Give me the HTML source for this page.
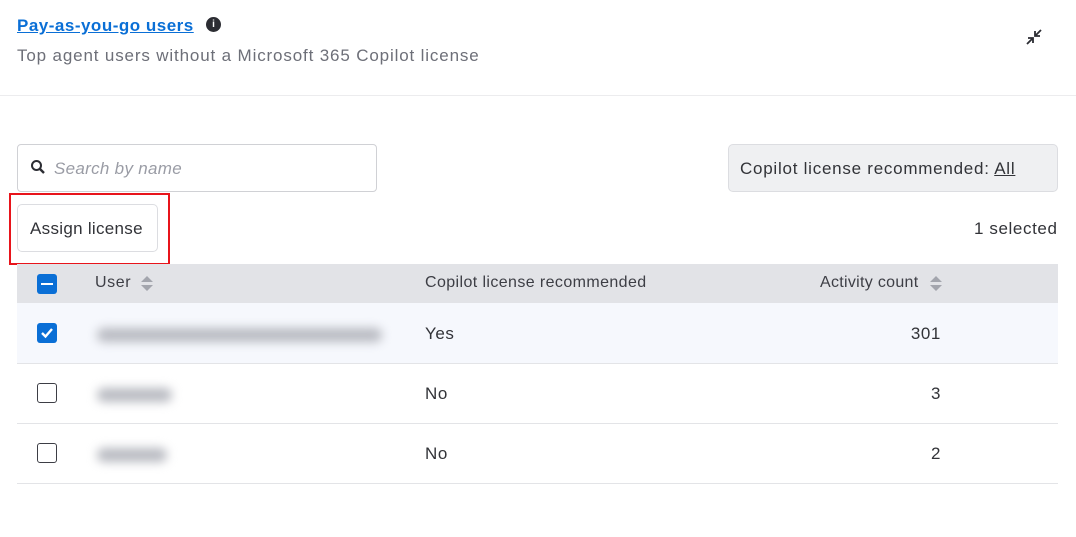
<!DOCTYPE html>
<html><head><style>
body{margin:0;width:1076px;height:537px;background:#fff;font-family:"Liberation Sans",sans-serif;color:#323338;position:relative;overflow:hidden;letter-spacing:0.6px}
.a{position:absolute}
.cb{position:absolute;left:37px;width:20px;height:20px;border-radius:3px;box-sizing:border-box}
.blur{position:absolute;height:14px;background:#b8bac1;filter:blur(5px);border-radius:7px}
</style></head><body>
<div class="a" style="left:17px;top:16px;font-size:17px;font-weight:bold;color:#0a6fd6;text-decoration:underline;letter-spacing:0.5px">Pay-as-you-go users</div>
<div class="a" style="left:206px;top:17px;width:15px;height:15px;border-radius:50%;background:#2c2d33;color:#fff;font-size:10px;font-weight:bold;text-align:center;line-height:15px;letter-spacing:0">i</div>
<div class="a" style="left:17px;top:46px;font-size:17px;color:#6d6f78;letter-spacing:0.85px">Top agent users without a Microsoft 365 Copilot license</div>
<svg class="a" style="left:1024px;top:27px" width="20" height="20" viewBox="0 0 20 20"><path d="M3 17L9 11M4 11h5v5M17 3l-6 6M16 9h-5V4" stroke="#2c2d33" stroke-width="1.8" fill="none"/></svg>
<div class="a" style="left:0;top:95px;width:1076px;height:1px;background:#ececee"></div>
<div class="a" style="left:17px;top:144px;width:358px;height:46px;border:1px solid #d0d1d5;border-radius:4px"></div>
<svg class="a" style="left:30px;top:159px" width="16" height="16" viewBox="0 0 16 16"><circle cx="6.5" cy="6.5" r="4.5" stroke="#2c2d33" stroke-width="2" fill="none"/><path d="M10 10l4 4" stroke="#2c2d33" stroke-width="2.4"/></svg>
<div class="a" style="left:54px;top:159px;font-size:17px;font-style:italic;color:#9a9ca5;letter-spacing:0.3px">Search by name</div>
<div class="a" style="left:728px;top:144px;width:328px;height:46px;border:1px solid #dcdde1;border-radius:5px;background:#eff0f2"></div>
<div class="a" style="left:740px;top:159px;font-size:17px;color:#323338;letter-spacing:0.75px">Copilot license recommended: <span style="text-decoration:underline">All</span></div>
<div class="a" style="left:9px;top:193px;width:157px;height:68px;border:2px solid #e8141b"></div>
<div class="a" style="left:17px;top:204px;width:139px;height:46px;border:1px solid #dcdde1;border-radius:5px"></div>
<div class="a" style="left:30px;top:219px;font-size:17px;color:#323338;letter-spacing:0.3px">Assign license</div>
<div class="a" style="left:974px;top:219px;font-size:17px;color:#323338;letter-spacing:0.6px">1 selected</div>
<div class="a" style="left:17px;top:264px;width:1041px;height:39px;background:#e2e3e7"></div>
<div class="cb" style="top:274px;background:#0a6fd6"><div style="position:absolute;left:4px;top:8.5px;width:12px;height:2.5px;background:#fff"></div></div>
<div class="a" style="left:95px;top:274px;font-size:16px;color:#3d3e45">User</div>
<svg class="a" style="left:140px;top:275px" width="14" height="17"><path d="M1 7L7 1L13 7ZM1 10L7 16L13 10Z" fill="#a3a5ad"/></svg>
<div class="a" style="left:425px;top:274px;font-size:16px;color:#3d3e45;letter-spacing:0.4px">Copilot license recommended</div>
<div class="a" style="left:820px;top:274px;font-size:16px;color:#3d3e45;letter-spacing:0.3px">Activity count</div>
<svg class="a" style="left:929px;top:275px" width="14" height="17"><path d="M1 7L7 1L13 7ZM1 10L7 16L13 10Z" fill="#a3a5ad"/></svg>
<div class="a" style="left:17px;top:303px;width:1041px;height:60px;background:#f6f8fd"></div>
<div class="a" style="left:17px;top:363px;width:1041px;height:1px;background:#e3e4e7"></div>
<div class="a" style="left:17px;top:423px;width:1041px;height:1px;background:#e3e4e7"></div>
<div class="a" style="left:17px;top:483px;width:1041px;height:1px;background:#e3e4e7"></div>
<div class="cb" style="top:323px;background:#0a6fd6"><svg width="20" height="20"><path d="M5 10l3.5 3.5L15 6" stroke="#fff" stroke-width="2.4" fill="none"/></svg></div>
<div class="cb" style="top:383px;border:1.5px solid #3d3e45"></div>
<div class="cb" style="top:443px;border:1.5px solid #3d3e45"></div>
<div class="blur" style="left:97px;top:328px;width:285px"></div>
<div class="blur" style="left:97px;top:388px;width:75px"></div>
<div class="blur" style="left:97px;top:448px;width:70px"></div>
<div class="a" style="left:425px;top:324px;font-size:17px">Yes</div>
<div class="a" style="left:425px;top:384px;font-size:17px">No</div>
<div class="a" style="left:425px;top:444px;font-size:17px">No</div>
<div class="a" style="left:840px;width:101px;text-align:right;top:324px;font-size:17px">301</div>
<div class="a" style="left:840px;width:101px;text-align:right;top:384px;font-size:17px">3</div>
<div class="a" style="left:840px;width:101px;text-align:right;top:444px;font-size:17px">2</div>
</body></html>
